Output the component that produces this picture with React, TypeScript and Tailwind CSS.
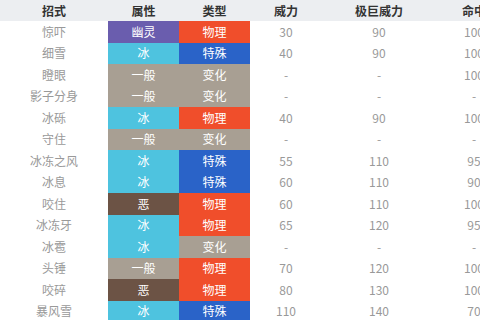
import React from "react";

type Row = [string, string, string, string, string, string];

const rows: Row[] = [
  ["惊吓", "幽灵", "物理", "30", "90", "100"],
  ["细雪", "冰", "特殊", "40", "90", "100"],
  ["瞪眼", "一般", "变化", "-", "-", "100"],
  ["影子分身", "一般", "变化", "-", "-", "-"],
  ["冰砾", "冰", "物理", "40", "90", "100"],
  ["守住", "一般", "变化", "-", "-", "-"],
  ["冰冻之风", "冰", "特殊", "55", "110", "95"],
  ["冰息", "冰", "特殊", "60", "110", "90"],
  ["咬住", "恶", "物理", "60", "110", "100"],
  ["冰冻牙", "冰", "物理", "65", "120", "95"],
  ["冰雹", "冰", "变化", "-", "-", "-"],
  ["头锤", "一般", "物理", "70", "120", "100"],
  ["咬碎", "恶", "物理", "80", "130", "100"],
  ["暴风雪", "冰", "特殊", "110", "140", "70"],
];

const attrColor: Record<string, string> = {
  幽灵: "bg-[#6a5dae]",
  冰: "bg-[#4ec3df]",
  一般: "bg-[#a89f93]",
  恶: "bg-[#6c5345]",
};

const typeColor: Record<string, string> = {
  物理: "bg-[#f04e2b]",
  特殊: "bg-[#2a63c8]",
  变化: "bg-[#a89f93]",
};

const font = { fontFamily: '"Noto Sans CJK SC", "Noto Sans", sans-serif' };

export default function App() {
  return (
    <div className="w-[480px] h-[320px] overflow-hidden bg-white" style={font}>
      <div className="w-[512px]">
        <div className="flex h-[21px] bg-[#eceef1] text-[12px] font-bold text-[#333] items-center">
          <div className="w-[108px] text-center">招式</div>
          <div className="w-[71px] text-center">属性</div>
          <div className="w-[71px] text-center">类型</div>
          <div className="w-[72px] text-center">威力</div>
          <div className="w-[114px] text-center">极巨威力</div>
          <div className="w-[76px] text-center">命中</div>
        </div>
        {rows.map((r, i) => (
          <div key={i} className="flex h-[21.5px] text-[12px] items-stretch">
            <div className="w-[108px] flex items-center justify-center text-[#999]">{r[0]}</div>
            <div className={`w-[71px] flex items-center justify-center text-white ${attrColor[r[1]]}`}>{r[1]}</div>
            <div className={`w-[71px] flex items-center justify-center text-white ${typeColor[r[2]]}`}>{r[2]}</div>
            <div className="w-[72px] flex items-center justify-center text-[#999]">{r[3]}</div>
            <div className="w-[114px] flex items-center justify-center text-[#999]">{r[4]}</div>
            <div className="w-[76px] flex items-center justify-center text-[#999]">{r[5]}</div>
          </div>
        ))}
      </div>
    </div>
  );
}
